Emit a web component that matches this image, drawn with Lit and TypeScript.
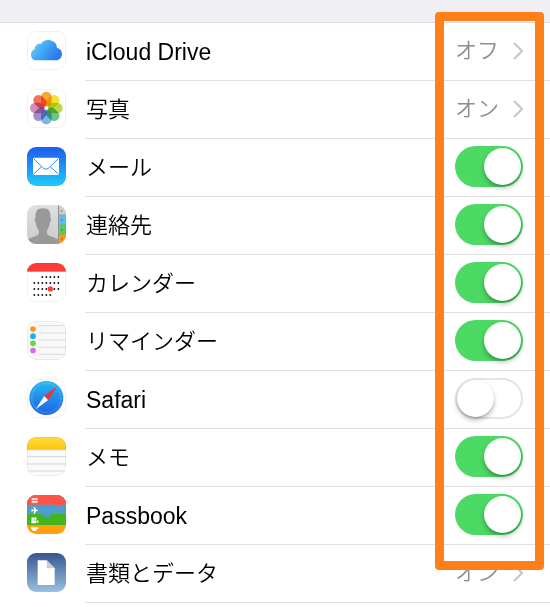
import { LitElement, html, css, svg, nothing } from "lit";
import { customElement, property, state } from "lit/decorators.js";

interface Service {
  id: string;
  name: string;
  lang: "en" | "ja";
  kind: "link" | "switch";
  value?: string;
  on?: boolean;
}

const SERVICES: Service[] = [
  { id: "drive", name: "iCloud Drive", lang: "en", kind: "link", value: "オフ" },
  { id: "photos", name: "写真", lang: "ja", kind: "link", value: "オン" },
  { id: "mail", name: "メール", lang: "ja", kind: "switch", on: true },
  { id: "contacts", name: "連絡先", lang: "ja", kind: "switch", on: true },
  { id: "calendar", name: "カレンダー", lang: "ja", kind: "switch", on: true },
  { id: "reminders", name: "リマインダー", lang: "ja", kind: "switch", on: true },
  { id: "safari", name: "Safari", lang: "en", kind: "switch", on: false },
  { id: "notes", name: "メモ", lang: "ja", kind: "switch", on: true },
  { id: "passbook", name: "Passbook", lang: "en", kind: "switch", on: true },
  { id: "documents", name: "書類とデータ", lang: "ja", kind: "link", value: "オン" },
];

const PETALS = ["#f9a01f", "#f4e01c", "#b5d63c", "#62bf85", "#6db3e8", "#9a86c9", "#cf86b4", "#f4655a"];

const gradient = (id: string, from: string, to: string) => svg`
  <linearGradient id=${id} x1="0" y1="0" x2="0" y2="1">
    <stop offset="0" stop-color=${from} /><stop offset="1" stop-color=${to} />
  </linearGradient>`;

const dotRow = (y: number, first: number, last: number) =>
  Array.from({ length: last - first + 1 }, (_, i) => svg`
    <circle cx=${22 + (first + i) * 12} cy=${y} r="2.8" fill="#111" />`);

const ARTWORK: Record<string, unknown> = {
  drive: svg`
    <defs><linearGradient id="g" x1="0" y1="0" x2="1" y2="0.5">
      <stop offset="0" stop-color="#7fd3f7" /><stop offset="0.45" stop-color="#47aef5" /><stop offset="1" stop-color="#2a78ee" />
    </linearGradient></defs>
    <rect width="117" height="117" fill="#fff" />
    <path fill="url(#g)" d="M28 88C18 88 12 80 12 71C12 63 17 57 23 55C22 45 30 38 38 38C40 38 41 38 42 39C46 31 54 27 64 27C79 27 90 38 90 51C99 52 105 60 105 69C105 80 97 88 87 88Z" />
    <path fill="none" stroke="#3fa4f2" stroke-opacity=".45" stroke-width="2" d="M42 39C49 41 53 47 53 53" />`,
  photos: svg`
    <rect width="117" height="117" fill="#fff" />
    <g class="petals">${PETALS.map((c, i) => svg`
      <rect x="42" y="8" width="32" height="44" rx="16" fill=${c} fill-opacity=".92" transform=${`rotate(${i * 45} 58 57)`} />`)}
    </g>`,
  mail: svg`
    <defs>${gradient("g", "#1e5bee", "#1cccfb")}</defs>
    <rect width="117" height="117" fill="url(#g)" />
    <rect x="18" y="32" width="78" height="52" rx="4" fill="#fff" />
    <g fill="none" stroke="#2b8ff3" stroke-width="3"><path d="M20 35L50 64Q57 70 64 64L94 35M20 81L44 59M94 81L70 59" /></g>`,
  contacts: svg`
    <defs>${gradient("g", "#dfdfdf", "#cbcbcb")}</defs>
    <rect width="117" height="117" fill="url(#g)" />
    <path fill="#999" d="M0 117V104C9 98 25 96 33 90C37 86 36 79 34 74C29 68 27 60 26 52C22 46 23 39 26 37C24 20 31 10 48 10C65 10 72 20 70 37C74 40 73 47 69 52C68 60 66 68 61 74C59 80 59 87 63 90C71 96 87 98 94 104V117Z" />
    <rect x="93" width="4" height="117" fill="#8f8f8f" />
    <rect x="97" width="20" height="29" fill="#cfcfc8" />
    <rect x="97" y="29" width="20" height="30" fill="#57bdf3" />
    <rect x="97" y="59" width="20" height="29" fill="#4fcf58" />
    <rect x="97" y="88" width="20" height="29" fill="#ff9315" />
    <path stroke="#777" stroke-opacity=".4" stroke-width="2" d="M97 29H117M97 59H117M97 88H117" />
    <g fill="#555" fill-opacity=".45"><circle cx="104" cy="18" r="3" /><circle cx="104" cy="45" r="3" /><circle cx="104" cy="74" r="3" /><circle cx="104" cy="102" r="3" /></g>`,
  calendar: svg`
    <rect width="117" height="117" fill="#fff" /><rect width="117" height="26" fill="#fc3d39" />
    ${dotRow(42, 2, 6)}${dotRow(60, 0, 6)}${dotRow(78, 0, 6)}${dotRow(96, 0, 4)}
    <circle cx="70" cy="78" r="8" fill="#fc3d39" />`,
  reminders: svg`
    <rect width="117" height="117" fill="#f8f8f8" />
    <path stroke="#dadada" stroke-width="3" d="M35 14H117M35 36H117M35 57H117M35 79H117M35 100H117" />
    ${["#ff9712", "#1badf8", "#63da38", "#cc73e1"].map((c, i) => svg`<circle cx="18" cy=${24 + i * 21.5} r="8.5" fill=${c} />`)}`,
  safari: svg`
    <defs>${gradient("g", "#24b8f2", "#1f62e6")}</defs>
    <rect width="117" height="117" fill="#fff" />
    <circle cx="58" cy="57" r="51" fill="url(#g)" />
    <circle cx="58" cy="57" r="44" fill="none" stroke="#fff" stroke-opacity=".35" stroke-width="5" stroke-dasharray="1.5 3.1" />
    <path fill="#fff" d="M52 51L64 63L26 91Z" /><path fill="#fb2d2a" d="M52 51L64 63L90 22Z" />`,
  notes: svg`
    <defs>${gradient("g", "#ffdb3d", "#fdc70c")}</defs>
    <rect width="117" height="117" fill="#fbfbfb" /><rect width="117" height="36" fill="url(#g)" />
    <path stroke="#b9a671" stroke-width="3" stroke-dasharray="2 1" d="M0 38H117" />
    <path stroke="#d6d6d6" stroke-width="3" d="M0 59H117M0 81H117M0 102H117" />`,
  passbook: svg`
    <rect width="117" height="117" fill="#ff9f0d" /><rect width="117" height="90" fill="#42b41c" />
    <path fill="#4b9fcf" d="M0 0H117V57H73C69 57 70 68 59 68C48 68 49 57 45 57H0Z" />
    <path fill="#ff5548" d="M0 0H117V29H103C100 29 101 35 95 35C89 35 90 29 87 29H0Z" />
    <g fill="#fff">
      <path d="M14 10H32V14H14ZM14 17H32V23H14Z" />
      <path d="M13 42L16 43L18 44H22L19 36H23L28 44H31Q35 46 31 48H28L23 56H19L22 48H18L15 50H13L14 46Z" />
      <circle cx="17" cy="71" r="4" /><circle cx="25" cy="71" r="4" /><path d="M13 76H28V85H13ZM29 79L34 75V85L29 81Z" />
      <path d="M12 97H34V102H30L27 108H18L14 101H12Z" />
    </g>`,
  documents: svg`
    <defs>${gradient("g", "#36578f", "#9ac0df")}</defs>
    <rect width="117" height="117" fill="url(#g)" />
    <path fill="#fff" d="M32 22H59L83 46V96H32Z" /><path fill="#cdcdcd" d="M59 22L83 46H59Z" />`,
};

@customElement("app-icon")
export class AppIcon extends LitElement {
  @property() name = "";

  static styles = css`
    :host { display: block; width: 39px; height: 39px; }
    .art { display: block; width: 100%; height: 100%; border-radius: 9px; }
    .petals { isolation: isolate; }
    .petals rect { mix-blend-mode: multiply; }
    .edge { fill: none; stroke: #000; stroke-opacity: 0.07; stroke-width: 3; }
  `;

  render() {
    const pale = ["drive", "photos", "calendar", "reminders", "safari", "notes"].includes(this.name);
    return html`<svg class="art" viewBox="0 0 117 117" aria-hidden="true">
      ${ARTWORK[this.name]}
      ${pale ? svg`<rect class="edge" x="1" y="1" width="115" height="115" rx="26" />` : nothing}
    </svg>`;
  }
}

@customElement("app-root")
export class AppRoot extends LitElement {
  @state() private services = SERVICES;

  static styles = css`
    :host {
      display: block;
      min-height: 100vh;
      background: #fff;
      color: #000;
      font-family: "Liberation Sans", "Noto Sans CJK JP", sans-serif;
      font-size: 22px;
      line-height: 32px;
    }
    .page { position: relative; }
    .band { height: 22px; background: #efeff4; border-bottom: 1px solid #d9d9de; box-sizing: content-box; }
    .list { list-style: none; margin: 0; padding: 0; }
    .row {
      display: flex;
      align-items: center;
      height: 58px;
      padding-left: 27px;
      color: inherit;
      text-decoration: none;
    }
    .body {
      flex: 1;
      align-self: stretch;
      display: flex;
      align-items: center;
      justify-content: space-between;
      box-sizing: border-box;
      margin-left: 19px;
      padding: 0 27px 2px 1px;
      border-bottom: 1px solid #e0e0e2;
    }
    .icon { margin-bottom: 3px; }
    .name { padding-top: 3px; font-weight: 350; }
    .name:lang(en) { font-size: 23px; font-weight: 400; }
    .detail { display: flex; align-items: center; gap: 14px; color: #8e8e93; font-weight: 350; }
    .chevron { display: block; width: 10px; height: 18px; fill: none; stroke: #c4c4c9; stroke-width: 2; }
    .switch {
      appearance: none;
      box-sizing: border-box;
      width: 68px;
      height: 41px;
      margin: 0;
      padding: 2px;
      border-radius: 21px;
      background: #fff;
      box-shadow: inset 0 0 0 2px #e4e4e4;
      display: flex;
      align-items: center;
    }
    .switch::before {
      content: "";
      width: 37px;
      height: 37px;
      border-radius: 50%;
      background: #fff;
      box-shadow: 0 3px 5px rgba(0, 0, 0, 0.28), 0 1px 1px rgba(0, 0, 0, 0.12);
    }
    .switch:checked { background: #4cd964; box-shadow: none; justify-content: flex-end; }
    .highlight {
      position: absolute;
      top: 12px;
      right: 6px;
      bottom: 33px;
      width: 109px;
      box-sizing: border-box;
      border: 9px solid #ff8018;
      border-radius: 4px;
      pointer-events: none;
    }
  `;

  private toggle(id: string) {
    this.services = this.services.map((s) => (s.id === id ? { ...s, on: !s.on } : s));
  }

  private renderRow(s: Service) {
    const icon = html`<app-icon class="icon" name=${s.id}></app-icon>`;
    const name = html`<span class="name" lang=${s.lang}>${s.name}</span>`;
    if (s.kind === "link") {
      return html`<a class="row" href="#${s.id}">${icon}
        <span class="body">${name}
          <span class="detail" lang="ja">${s.value}
            <svg class="chevron" viewBox="0 0 10 18" aria-hidden="true"><path d="M1 1L9 9L1 17" /></svg>
          </span>
        </span></a>`;
    }
    return html`<label class="row" for=${s.id}>${icon}
      <span class="body">${name}
        <input class="switch" type="checkbox" role="switch" id=${s.id} .checked=${!!s.on} @change=${() => this.toggle(s.id)} />
      </span></label>`;
  }

  render() {
    return html`<main class="page">
      <div class="band"></div>
      <ul class="list">${this.services.map((s) => html`<li>${this.renderRow(s)}</li>`)}</ul>
      <div class="highlight"></div>
    </main>`;
  }
}
